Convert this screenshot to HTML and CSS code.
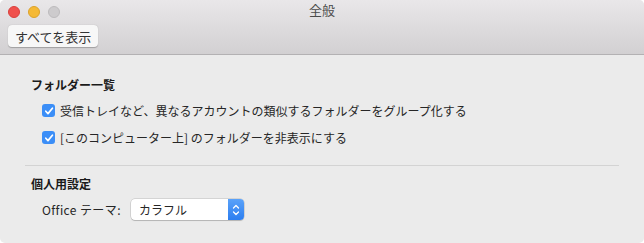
FILE: index.html
```html
<!DOCTYPE html>
<html lang="ja">
<head>
<meta charset="utf-8">
<link rel="stylesheet" href="styles.css">
</head>
<body>
<div class="window">
  <header class="chrome">
    <div class="titlebar">
      <div class="lights">
        <span class="light red"></span>
        <span class="light yellow"></span>
        <span class="light gray"></span>
      </div>
      <div class="title">全般</div>
    </div>
    <div class="toolbar">
      <button class="showall">すべてを表示</button>
    </div>
  </header>
  <main class="content">
    <section class="group">
      <h2 class="heading">フォルダー一覧</h2>
      <label class="check"><span class="box"><svg viewBox="0 0 12 12" width="12" height="12"><path d="M2.8 6.2 L5 8.6 L9.4 3.2" fill="none" stroke="#fff" stroke-width="1.7" stroke-linecap="round" stroke-linejoin="round"/></svg></span>受信トレイなど、異なるアカウントの類似するフォルダーをグループ化する</label>
      <label class="check"><span class="box"><svg viewBox="0 0 12 12" width="12" height="12"><path d="M2.8 6.2 L5 8.6 L9.4 3.2" fill="none" stroke="#fff" stroke-width="1.7" stroke-linecap="round" stroke-linejoin="round"/></svg></span>[このコンピューター上] のフォルダーを非表示にする</label>
    </section>
    <hr class="sep">
    <section class="group">
      <h2 class="heading">個人用設定</h2>
      <div class="row">
        <span class="label">Office テーマ:</span>
        <div class="popup">
          <span class="popup-text">カラフル</span>
          <span class="popup-arrows"><svg viewBox="0 0 16 20" width="16" height="20"><path d="M5.5 8 L8 5.5 L10.5 8 M5.5 12 L8 14.5 L10.5 12" fill="none" stroke="#fff" stroke-width="1.3" stroke-linecap="round" stroke-linejoin="round"/></svg></span>
        </div>
      </div>
    </section>
  </main>
</div>
</body>
</html>
```

FILE: styles.css
```css
* { box-sizing: border-box; }
html, body { margin: 0; padding: 0; background: #ffffff; }
body {
  font-family: "Noto Sans CJK JP", "Noto Sans", sans-serif;
  font-size: 12px;
  color: #262626;
}
.window {
  width: 644px;
  height: 243px;
  background: #ebebeb;
  border-radius: 5px;
  overflow: hidden;
  display: flex;
  flex-direction: column;
}
.chrome {
  height: 55px;
  background: linear-gradient(#e9e7e9, #d2d0d2);
  border-bottom: 1px solid #b3b1b3;
  display: flex;
  flex-direction: column;
}
.titlebar {
  height: 23px;
  display: flex;
  align-items: center;
  position: relative;
}
.lights {
  display: flex;
  gap: 8px;
  padding-left: 8px;
}
.light {
  width: 12px;
  height: 12px;
  border-radius: 50%;
  display: block;
}
.red { background: #f0504c; border: 0.5px solid #d9403c; }
.yellow { background: #f5b935; border: 0.5px solid #dca22a; }
.gray { background: #cdcbcd; border: 0.5px solid #bdbbbd; }
.title {
  position: absolute;
  left: 0;
  right: 0;
  top: 1px;
  text-align: center;
  font-size: 13px;
  color: #4a4a4a;
  line-height: 17px;
}
.toolbar {
  padding: 2px 8px 0;
}
.showall {
  font-family: inherit;
  font-size: 13px;
  color: #333;
  height: 22px;
  padding: 0 7px;
  background: #f7f7f7;
  border: none;
  border-radius: 4px;
  box-shadow: 0 0.5px 1px rgba(0,0,0,0.25);
  line-height: 21px;
}
.content {
  flex: 1;
  padding: 20px 25px 0 25px;
  display: flex;
  flex-direction: column;
}
.group {
  display: flex;
  flex-direction: column;
}
.heading {
  margin: 0 0 0 6px;
  font-size: 12px;
  font-weight: bold;
  color: #1a1a1a;
  line-height: 20px;
}
.check {
  display: flex;
  align-items: center;
  gap: 5px;
  margin-left: 17px;
  line-height: 21px;
  color: #262626;
}
.check + .check { margin-top: 6px; }
.heading + .check { margin-top: 5px; }
.box {
  width: 13px;
  height: 13px;
  border-radius: 3px;
  background: #3b8ef7;
  display: flex;
  align-items: center;
  justify-content: center;
}
.sep {
  border: none;
  border-top: 1px solid #d3d3d3;
  margin: 17px 0 8px 0;
  width: 594px;
}
.row {
  display: flex;
  align-items: center;
  margin-left: 17px;
  margin-top: 5px;
  gap: 10px;
}
.label { font-size: 12px; color: #262626; letter-spacing: 0.4px; }
.popup {
  width: 113px;
  height: 21px;
  background: #fff;
  border-radius: 4px;
  box-shadow: 0 0 0 0.5px rgba(0,0,0,0.2), 0 1px 1px rgba(0,0,0,0.15);
  display: flex;
  align-items: center;
  overflow: hidden;
}
.popup-text {
  flex: 1;
  padding-left: 8px;
  font-size: 12px;
  color: #262626;
}
.popup-arrows {
  width: 16px;
  height: 21px;
  background: linear-gradient(#5aa2f9, #2c7ef0);
  display: flex;
  align-items: center;
  justify-content: center;
}
```
